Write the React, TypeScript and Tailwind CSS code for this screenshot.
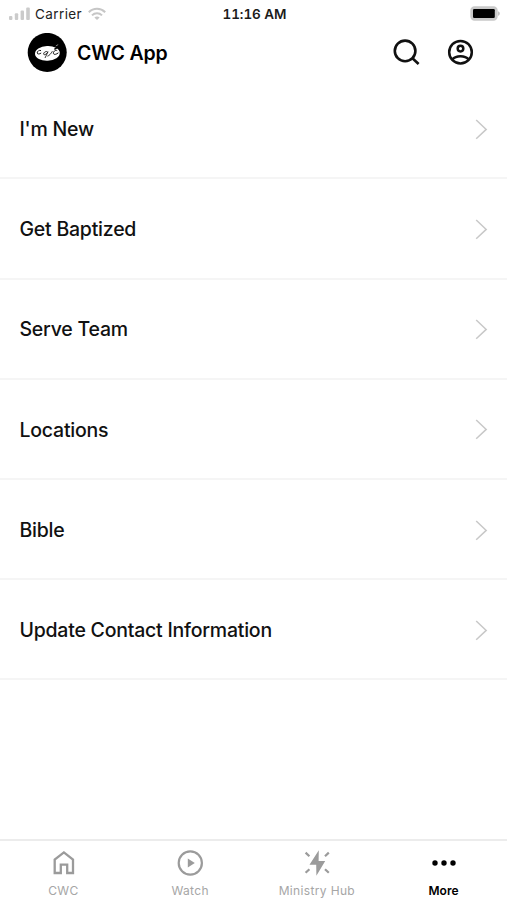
import { ReactNode } from "react"

type Tab = {
    label: string,
    icon: ReactNode,
    active?: boolean
}

const menuItems = ["I'm New", "Get Baptized", "Serve Team", "Locations", "Bible", "Update Contact Information"]

const tabs: Tab[] = [
    { label: "CWC", icon: <HomeIcon /> },
    { label: "Watch", icon: <PlayIcon /> },
    { label: "Ministry Hub", icon: <BoltIcon /> },
    { label: "More", icon: <DotsIcon />, active: true }
]

function HomeIcon() {
    return (
        <svg width="28" height="28" viewBox="0 0 28 28" fill="none" stroke="currentColor" strokeWidth="2.3">
            <path d="M5.7 24V10.6L14.9 3.4L24 10.6V24H18.2V15.7H11.8V24Z" />
        </svg>
    )
}

function PlayIcon() {
    return (
        <svg width="28" height="28" viewBox="0 0 28 28" fill="none">
            <circle cx="14.3" cy="14" r="11.6" stroke="currentColor" strokeWidth="2.2" />
            <path d="M11.8 9.5V18.5L18.8 14Z" fill="currentColor" />
        </svg>
    )
}

function BoltIcon() {
    return (
        <svg width="28" height="28" viewBox="0 0 28 28" fill="none">
            <path d="M15.8 1.2L6.5 15.7H13.2L13.4 26.8L22.2 12.1H15.6Z" fill="currentColor" />
            <path d="M2.6 3.6L6.4 7.2M25.8 3.6L22 7.2M2.6 23.8L6.4 20.2M25.8 23.8L22 20.2" stroke="currentColor" strokeWidth="2.2" />
        </svg>
    )
}

function DotsIcon() {
    return (
        <svg width="28" height="28" viewBox="0 0 28 28" fill="currentColor">
            <circle cx="5" cy="14" r="2.7" />
            <circle cx="14" cy="14" r="2.7" />
            <circle cx="23" cy="14" r="2.7" />
        </svg>
    )
}

function Logo() {
    return (
        <svg width="40" height="40" viewBox="0 0 40 40" fill="none">
            <circle cx="20.2" cy="19.4" r="19.5" fill="#000" />
            <ellipse cx="20.4" cy="20.4" rx="12.4" ry="7.4" fill="#fff" transform="rotate(-3 20 20.6)" />
            <path d="M14 17.6C12.4 16.8 10 18.2 10.2 20C10.4 21.4 12.6 21.2 14.2 20" stroke="#000" strokeWidth="0.9" />
            <path d="M20.6 18.8C18.8 17.8 16.2 19.6 16.6 21.2C17.2 22.6 19.6 21.2 21 18.8L18 25M20.4 23.2C22.4 22.6 24 20.6 25.4 18.2" stroke="#222" strokeWidth="0.9" />
            <path d="M30.2 17.6C28.2 16.6 26 18.8 26.4 20.6C27 22 29.4 21.4 31.4 19.8" stroke="#111" strokeWidth="1" />
            <path d="M27.4 16.4L32.4 13.2" stroke="#000" strokeWidth="1.6" />
            <path d="M28.8 13L31.2 11.6" stroke="#888" strokeWidth="1" />
        </svg>
    )
}

function StatusBar() {
    return (
        <div className="grid h-7 grid-cols-3 items-center pl-[9px] pr-[7px] text-[13.5px] leading-none">
            <div className="flex items-center">
                <svg width="22" height="14" viewBox="0 0 22 14" fill="#cbcbcb">
                    <rect x="0" y="9" width="3.4" height="4" rx="1" />
                    <rect x="5.8" y="6.2" width="3.4" height="6.8" rx="1" />
                    <rect x="11.6" y="3.4" width="3.4" height="9.6" rx="1" />
                    <rect x="17.2" y="0.5" width="3.6" height="12.5" rx="1" />
                </svg>
                <span className="ml-[4px] pt-[2px] tracking-[0.4px] text-[#222]">Carrier</span>
                <svg className="ml-[6px]" width="18" height="14" viewBox="0 0 18 14" fill="none" stroke="#c6c6c6" strokeWidth="2">
                    <path d="M0.8 5.2C5.4 0.6 12.6 0.6 17.2 5.2" />
                    <path d="M4 8.4C6.8 5.6 11.2 5.6 14 8.4" />
                    <path d="M6.4 10.4C7.8 9.1 10.2 9.1 11.6 10.4L9 13Z" fill="#c6c6c6" stroke="none" />
                </svg>
            </div>
            <span className="pt-[2px] text-center font-semibold tabular-nums tracking-[-0.05px] text-[#1b1b1b]">11:16 AM</span>
            <svg className="justify-self-end" width="31" height="16" viewBox="0 0 31 16">
                <rect x="2" y="1" width="26" height="13" rx="3.5" fill="#c9c9c9" stroke="#c9c9c9" strokeWidth="1.4" />
                <rect x="4" y="3" width="21.8" height="9" rx="1.2" fill="#000" />
                <path d="M29.2 5.2C31.2 6 31.2 9 29.2 9.8Z" fill="#b5b5b5" />
            </svg>
        </div>
    )
}

export default function App() {
    return (
        <div className="flex h-screen flex-col bg-white font-['Inter',sans-serif] text-black">
            <StatusBar />
            <header className="flex h-[50px] items-center pl-[27px] pr-[33px]">
                <Logo />
                <h1 className="ml-[10px] pt-[1px] text-[19.5px] font-semibold tracking-[-0.2px]">CWC App</h1>
                <button className="ml-auto" aria-label="Search">
                    <svg width="28" height="28" viewBox="0 0 28 28" fill="none" stroke="#111" strokeWidth="2.6">
                        <circle cx="13.1" cy="11.9" r="10.3" />
                        <path d="M20.2 19L26.6 25" />
                    </svg>
                </button>
                <button className="ml-[26px]" aria-label="Profile">
                    <svg width="28" height="28" viewBox="0 0 28 28" fill="none" stroke="#111" strokeWidth="2.5">
                        <circle cx="14.5" cy="13.2" r="11.3" />
                        <circle cx="14.5" cy="9.6" r="2.8" />
                        <path d="M6.4 20.4C10 16.2 19 16.2 22.6 20.4" />
                    </svg>
                </button>
            </header>

            <ul className="pt-[1.2px]">
                {menuItems.map((item) => (
                    <li key={item} className="flex h-[100.2px] items-center justify-between border-b-2 border-[#f5f5f5] pl-[19.5px] pr-[19px]">
                        <span className="pt-[2.6px] text-[19.5px] font-medium tracking-[-0.23px] text-[#111]">{item}</span>
                        <svg className="mt-[1px]" width="14" height="22" viewBox="0 0 14 22" fill="none" stroke="#c8c8c8" strokeWidth="1.5">
                            <path d="M2.2 2L12.2 11.4L2.2 20.8" />
                        </svg>
                    </li>
                ))}
            </ul>

            <nav className="mt-auto grid h-[61px] grid-cols-4 border-t-2 border-[#ececec]">
                {tabs.map((tab) => (
                    <div key={tab.label} className={tab.active ? "flex flex-col items-center pt-[8px] text-black" : "flex flex-col items-center pt-[8px] text-[#9b9b9b]"}>
                        {tab.icon}
                        <span className={tab.active ? "mt-[6px] text-[12px] leading-[16px] font-semibold tracking-[0.1px]" : "mt-[6px] text-[12px] leading-[16px] tracking-[0.35px] text-[#a6a6a6]"}>{tab.label}</span>
                    </div>
                ))}
            </nav>
        </div>
    )
}
